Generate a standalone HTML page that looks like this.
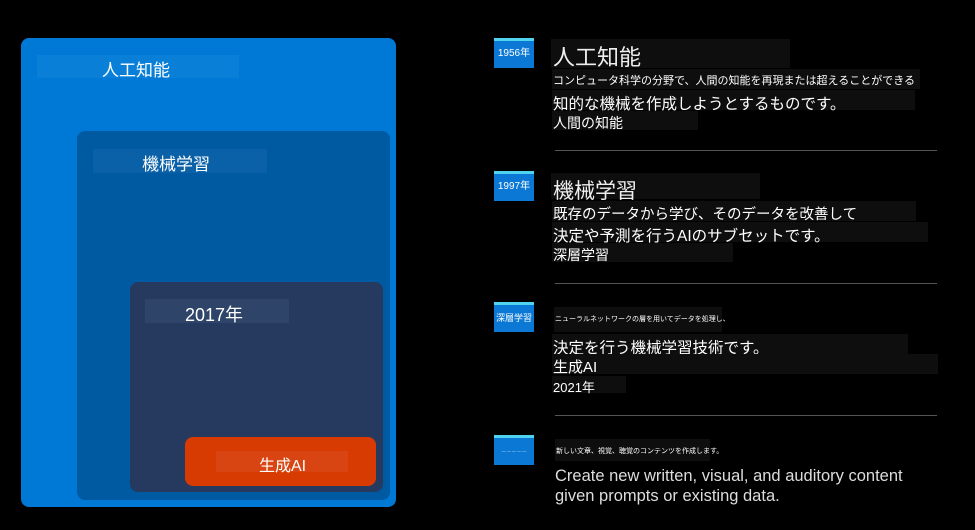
<!DOCTYPE html>
<html><head><meta charset="utf-8"><style>
*{margin:0;padding:0;box-sizing:border-box}
body{width:975px;height:530px;background:#000;position:relative;overflow:hidden;font-family:"Liberation Sans","Noto Sans CJK JP",sans-serif;color:#fff}
.a{position:absolute}
.bx{position:absolute;border-radius:8px}
.lab{position:absolute;white-space:nowrap}
.bg{position:absolute;background:#0e0e0e}
.badge{position:absolute;left:494px;width:40px;height:30px;background:#0a78d4;border-top:3px solid #4fd4f0;font-size:10px;text-align:center;line-height:26px;color:#fff}
.hr{position:absolute;left:555px;width:382px;height:1px;background:#555}
.t{position:absolute;white-space:nowrap;left:553px}
</style></head><body>
<div class="bx" style="left:21px;top:38px;width:375px;height:469px;background:#0078d6"></div>
<div class="a" style="left:37px;top:55px;width:202px;height:23px;background:#0a7fd8"></div>
<div class="lab" style="left:102px;top:56px;font-size:17px">人工知能</div>
<div class="bx" style="left:77px;top:131px;width:313px;height:369px;background:#005aa2"></div>
<div class="a" style="left:93px;top:149px;width:174px;height:24px;background:#0b61a8"></div>
<div class="lab" style="left:142px;top:150px;font-size:17px">機械学習</div>
<div class="bx" style="left:130px;top:282px;width:253px;height:210px;background:#263a60"></div>
<div class="a" style="left:145px;top:299px;width:144px;height:24px;background:#2e4468"></div>
<div class="lab" style="left:185px;top:301px;font-size:18px">2017年</div>
<div class="bx" style="left:185px;top:437px;width:191px;height:49px;background:#d83b01"></div>
<div class="a" style="left:216px;top:451px;width:132px;height:21px;background:#d84512"></div>
<div class="lab" style="left:259px;top:452px;font-size:16px">生成AI</div>

<div class="badge" style="top:38px">1956年</div>
<div class="bg" style="left:551px;top:39px;width:239px;height:29px"></div>
<div class="t" style="top:40px;font-size:22px;color:#eee">人工知能</div>
<div class="bg" style="left:552px;top:69px;width:368px;height:20px"></div>
<div class="t" style="top:72px;font-size:11px">コンピュータ科学の分野で、人間の知能を再現または超えることができる</div>
<div class="bg" style="left:552px;top:90px;width:363px;height:20px"></div>
<div class="t" style="top:92px;font-size:15.5px">知的な機械を作成しようとするものです。</div>
<div class="bg" style="left:552px;top:111px;width:146px;height:19px"></div>
<div class="t" style="top:113px;font-size:14px">人間の知能</div>
<div class="hr" style="top:150px"></div>

<div class="badge" style="top:171px">1997年</div>
<div class="bg" style="left:551px;top:173px;width:209px;height:26px"></div>
<div class="t" style="top:175px;font-size:21px;color:#eee">機械学習</div>
<div class="bg" style="left:552px;top:201px;width:364px;height:20px"></div>
<div class="t" style="top:203px;font-size:14.5px">既存のデータから学び、そのデータを改善して</div>
<div class="bg" style="left:552px;top:222px;width:376px;height:20px"></div>
<div class="t" style="top:224px;font-size:15.5px">決定や予測を行うAIのサブセットです。</div>
<div class="bg" style="left:552px;top:243px;width:181px;height:19px"></div>
<div class="t" style="top:245px;font-size:14px">深層学習</div>
<div class="hr" style="top:283px"></div>

<div class="badge" style="top:302px;font-size:9px">深層学習</div>
<div class="bg" style="left:554px;top:307px;width:168px;height:25px"></div>
<div class="t" style="top:314px;left:555px;font-size:7px">ニューラルネットワークの層を用いてデータを処理し、</div>
<div class="bg" style="left:552px;top:334px;width:356px;height:20px"></div>
<div class="t" style="top:336px;font-size:15.5px">決定を行う機械学習技術です。</div>
<div class="bg" style="left:552px;top:354px;width:386px;height:20px"></div>
<div class="t" style="top:356px;font-size:15px">生成AI</div>
<div class="bg" style="left:552px;top:376px;width:74px;height:17px"></div>
<div class="t" style="top:377px;font-size:13px">2021年</div>
<div class="hr" style="top:415px"></div>

<div class="badge" style="top:435px;font-size:4px">— — — — —</div>
<div class="bg" style="left:555px;top:439px;width:155px;height:22px"></div>
<div class="t" style="top:446px;left:556px;font-size:7px">新しい文章、視覚、聴覚のコンテンツを作成します。</div>
<div class="t" style="top:466px;left:555px;font-size:16.5px;line-height:20px;color:#ddd">Create new written, visual, and auditory content<br>given prompts or existing data.</div>
</body></html>
